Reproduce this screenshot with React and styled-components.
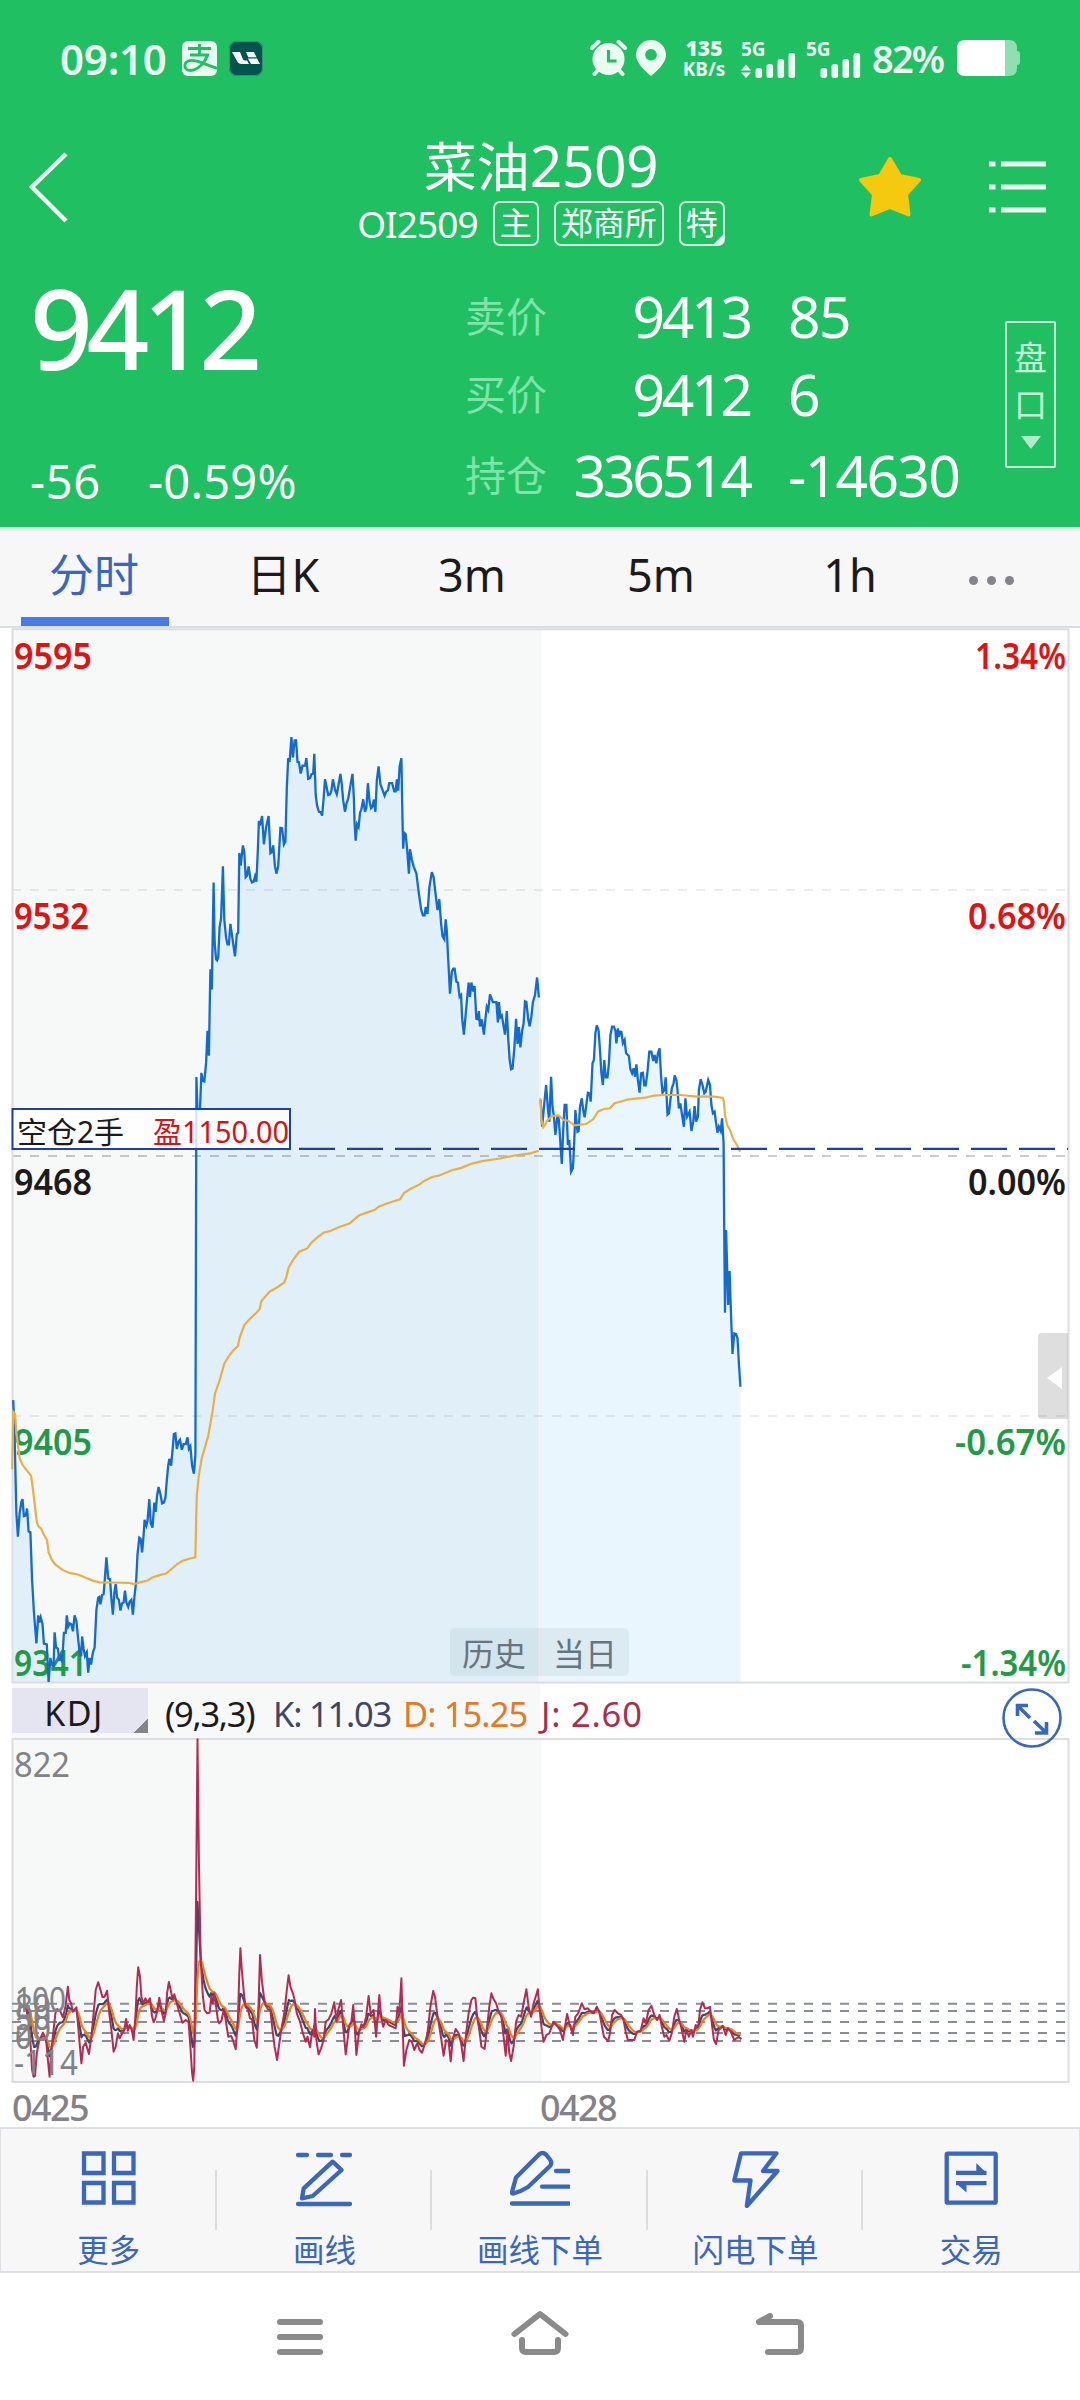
import React from "react";
import styled, { createGlobalStyle } from "styled-components";

const colors = {
  BRAND: "#20bf61",
  BRAND_MUTED: "#7fe3aa",
  UP: "#e01212",
  DOWN: "#1f9a48",
  TEXT: "#1b1b1b",
  TEXT_MUTED: "#828287",
  ACCENT: "#3a66bd",
  BORDER: "#dcdde1",
  PANEL: "#f7f7f8",
  PRICE: "#146bcf",
  AVERAGE: "#eaae48",
  K: "#3e4763",
  D: "#f07e1e",
  J: "#b32b52",
};

const FONT = '"Noto Sans", "Noto Sans CJK SC", sans-serif';

// Samples are stored as flat x,y lists on the plotting grid of each session.
const GRID_MORNING = { ox: 0, oy: 1140, sx: 2.8, sy: 2.703 };
const GRID_HISTORY = { ox: 0, oy: 620, sx: 2.8, sy: 2.8 };
const GRID_TODAY = { ox: 520, oy: 940, sx: 2.8, sy: 3 };
const GRID_KDJ = { ox: 0, oy: 1660, sx: 2.8, sy: 3 };
const GRID_KDJ_TODAY = { ox: 520, oy: 1660, sx: 2.8, sy: 3 };

const parse = (text, grid) =>
  text
    .trim()
    .split(/\s+/)
    .map((pair) => {
      const [x, y] = pair.split(",").map(Number);
      return [grid.ox + x / grid.sx, grid.oy + y / grid.sy];
    });

const line = (pts) =>
  "M" + pts.map(([x, y]) => `${x.toFixed(1)} ${y.toFixed(1)}`).join("L");

const area = (pts, bottom) =>
  `${line(pts)}L${pts[pts.length - 1][0].toFixed(1)} ${bottom}L${pts[0][0].toFixed(1)} ${bottom}Z`;

const priceHistory = [
  ...parse(
    `37,703 41,800 46,1010 50,1072 55,1010 60,978 63,971 67,1017 72,1015 76,996 80,1058 85,1060
    90,1190 95,1275 102,1361 107,1285 110,1304 114,1290 119,1308 123,1361 131,1363 136,1465 141,1400
    145,1418 150,1420 153,1331 157,1372 162,1375 166,1408 170,1390 174,1412 179,1332 184,1332
    187,1285 191,1315 195,1307 200,1310 204,1328 209,1285 214,1300 219,1350 223,1385 227,1395
    230,1342 234,1375 238,1395 243,1385 247,1440 251,1400 255,1418 260,1385 265,1372 270,1270
    275,1237 278,1235 281,1255 286,1230 290,1228 294,1180 298,1128 303,1185 308,1187 312,1240
    316,1283 320,1225 324,1200 328,1237 333,1243 337,1272 342,1252 346,1250 350,1218 354,1250
    359,1262 363,1248 368,1243 372,1283 377,1230 381,1195 385,1120 390,1075 394,1078 398,1115
    402,1068 405,1027 410,1042 413,1030 418,971 422,1035 427,1048 432,980 436,1005 440,960 444,938
    449,957 454,982 459,980 463,967 467,920 471,880 474,862 479,880 483,840 487,795 491,793 495,835
    500,815 504,810 509,837 514,822 520,822 525,804 529,835 533,828 538,880 543,902 547,850`,
    GRID_MORNING
  ),
  ...parse(
    `550,1280 553,1370 560,1370 564,1268 568,1290 572,1292 577,1240 581,1150 585,1220 587,1100
    589,978 593,1035 598,735 601,900 605,950 608,953 611,945 615,860 619,835 624,690 628,840 633,890
    637,908 641,908 645,851 650,885 658,942 663,880 667,875 670,652 674,688 680,631 684,650 688,720
    692,715 696,690 701,725 706,735 710,733 714,718 718,733 722,640 725,562 728,575 734,549 739,628
    745,580 752,549 757,653 761,650 765,631 770,690 774,710 779,690 785,582 790,583 795,628 799,620
    803,470 807,387 811,397 816,328 820,385 825,337 829,337 833,397 837,398 842,430 847,408 854,408
    858,387 863,445 868,443 872,432 877,430 880,375 884,490 888,520 893,537 898,538 902,548 906,500
    910,446 914,465 919,490 924,488 928,478 932,446 938,475 943,488 948,460 953,431 957,460 961,505
    966,537 970,515 975,500 980,470 987,431 991,500 993,570 996,618 1000,572 1004,580 1008,540
    1012,530 1017,502 1022,537 1026,525 1030,457 1035,510 1039,527 1043,522 1047,503 1051,537
    1055,450 1060,410 1065,460 1070,472 1077,492 1082,480 1086,477 1090,457 1098,457 1104,480
    1108,480 1111,446 1115,478 1119,410 1124,387 1127,560 1129,640 1132,596 1136,600 1140,640
    1145,710 1148,642 1153,670 1158,690 1166,710 1172,760 1179,810 1184,827 1189,827 1192,804
    1197,823 1202,750 1209,706 1214,720 1220,770 1225,812 1230,782 1235,850 1239,885 1244,894
    1248,838 1251,870 1255,950 1260,1046 1265,985 1269,976 1273,976 1278,1013 1282,1015 1287,1055
    1291,1050 1294,1115 1299,1161 1305,1090 1312,1015 1316,1055 1320,1015 1325,1040 1329,1025
    1334,1117 1338,1118 1341,1095 1344,1138 1349,1118 1355,1161 1360,1110 1363,1083 1367,1092
    1372,1048 1380,1070 1390,1070 1394,1127 1397,1070 1401,1112 1405,1107 1414,1161 1419,1095
    1423,1170 1427,1230 1431,1258 1435,1256 1440,1200 1445,1117 1449,1187 1453,1140 1457,1197
    1462,1150 1466,1130 1470,1068 1474,1070 1479,1118 1483,1138 1488,1110 1492,1070 1498,1050
    1504,1001 1509,1057`,
    GRID_HISTORY
  ),
];

const priceToday = parse(
  `58,480 62,560 68,490 73,435 78,505 82,545 87,410 91,500 95,530 99,585 105,525 109,540 113,610
  117,672 121,570 125,495 130,495 134,615 138,600 143,695 148,685 152,600 155,510 161,575 164,573
  168,500 173,475 177,510 181,532 185,500 190,458 195,460 198,485 203,370 207,360 211,280 215,256
  220,272 224,330 228,400 232,435 236,360 240,412 245,412 249,370 253,285 258,260 263,260 267,272
  270,310 274,265 277,290 280,275 284,276 288,310 293,300 297,340 305,348 309,388 314,400 318,385
  322,410 326,373 330,420 335,458 339,400 344,398 348,436 352,436 357,395 362,335 368,335 373,363
  377,345 382,370 386,340 391,325 395,410 399,458 404,450 408,412 413,524 417,520 421,480 425,445
  430,430 433,406 438,420 441,450 445,505 449,490 453,520 459,560 463,475 468,530 475,515 480,573
  485,545 489,498 493,545 498,530 501,450 506,418 511,435 516,460 520,455 527,420 532,435 536,495
  540,520 545,515 549,550 553,578 557,560 562,573 566,535 570,610 572,900 574,1118 577,870 580,980
  583,1095 587,993 591,1130 595,1242 600,1180 605,1182 609,1195 613,1270 617,1340`,
  GRID_TODAY
);

const averageHistory = parse(
  `34,890 37,735 42,740 46,790 55,860 63,878 75,893 87,908 93,950 103,1033 108,1045 115,1050
  122,1065 132,1082 136,1115 145,1135 155,1148 175,1162 195,1170 220,1175 240,1183 260,1191
  280,1196 310,1196 360,1197 375,1200 395,1195 413,1191 425,1183 445,1177 465,1172 480,1160
  495,1147 510,1138 530,1132 547,1128 549,1030 551,960 557,905 565,860 583,800 595,735 602,685
  615,650 628,605 642,582 655,567 666,557 671,535 684,500 700,483 720,465 727,457 732,435 755,410
  780,396 796,385 802,370 808,345 820,325 838,302 860,293 872,278 890,262 907,250 925,246 950,235
  980,225 1005,204 1025,197 1050,189 1060,180 1085,171 1120,160 1132,143 1150,132 1175,120
  1185,112 1210,100 1230,96 1265,82 1290,76 1320,64 1350,57 1400,50 1440,42 1485,36 1508,29`,
  GRID_MORNING
);

const averageToday = parse(
  `57,475 60,540 65,562 70,555 76,542 90,528 108,526 122,540 135,542 152,556 185,552 205,538
  218,515 235,507 252,505 265,490 285,484 305,478 350,473 375,467 400,465 450,465 495,470 545,470
  568,474 571,485 574,525 580,555 588,570 597,597 609,618 616,635`,
  GRID_TODAY
);

const kdjJ = [
  ...parse(
    `66,1030 72,1040 80,1080 86,1160 90,1230 94,1250 98,1248 103,1180 110,1140 115,1130 120,1118
    126,1130 130,1150 134,1200 139,1250 143,1180 149,1120 155,1060 160,1047 168,1052 176,1072
    183,1040 190,980 194,1020 199,1030 204,1055 214,1042 219,1100 228,1210 233,1160 240,1148
    249,1182 256,1130 262,1060 268,990 275,967 280,985 287,1012 293,1010 300,992 306,1060 312,1110
    318,1175 324,1160 330,1120 335,1135 340,1125 348,1110 353,1077 358,1112 363,1095 369,1110
    374,1140 379,1070 383,980 387,922 392,950 396,1010 401,1030 407,1015 412,1027 420,1015 425,1065
    430,1087 435,1075 440,1055 446,1013 452,1050 459,1083 464,1060 468,1000 473,966 478,990 483,1018
    488,1003 494,1025 500,1050 511,1088 520,1080 528,1087 533,1160 538,1240 541,1262 544,1220
    549,700 553,238 557,600 562,900 568,1010 573,1050 580,1060 587,1058 592,1010 596,1030 600,1000
    605,1040 610,1080 614,1090 620,1082 627,1048 632,1080 639,1130 647,1128 652,1140 660,1168
    666,1080 670,940 673,865 677,930 682,990 687,1040 694,1048 700,1075 706,1078 712,1140 719,1163
    724,1030 728,885 733,960 739,1010 743,1035 750,1048 757,1050 763,1110 769,1160 776,1200 782,1150
    789,1100 796,1060 803,990 808,946 813,980 820,1000 825,1020 831,1060 840,1085 848,1120 856,1145
    861,1130 868,1162 875,1110 880,1130 882,1047 886,1140 892,1183 899,1165 906,1140 912,1085
    920,1078 928,1060 936,1027 942,1085 947,1050 955,1020 960,1090 968,1183 973,1140 978,1095
    984,1085 989,1035 993,1090 998,1185 1005,1120 1012,1093 1018,1100 1025,1070 1032,1008 1038,1060
    1046,1050 1053,1130 1058,1060 1062,1005 1067,1070 1073,1100 1080,1080 1088,1095 1098,1100
    1108,1105 1113,1040 1118,1060 1124,955 1127,1080 1131,1217 1138,1170 1146,1140 1153,1145
    1160,1170 1168,1150 1175,1170 1182,1178 1190,1150 1197,1120 1205,1040 1213,993 1218,1010
    1224,1060 1230,1100 1236,1140 1242,1187 1249,1140 1256,1145 1262,1204 1268,1135 1276,1107
    1284,1120 1291,1150 1298,1203 1305,1120 1312,1060 1320,1020 1325,1013 1331,1015 1336,1070
    1342,1110 1348,1160 1357,1167 1363,1110 1370,1040 1376,1000 1382,1018 1389,1030 1396,1055
    1404,1070 1410,1130 1416,1187 1421,1110 1426,1180 1431,1203 1438,1160 1445,1085 1452,1065
    1459,1070 1466,1030 1474,988 1480,1040 1487,1070 1494,1030 1500,1010 1506,988 1511,1050`,
    GRID_KDJ
  ),
  ...parse(
    `60,1100 66,1145 74,1125 82,1120 94,1085 102,1095 112,1110 120,1140 126,1100 132,1062 138,1090
    148,1125 155,1070 163,1060 173,1030 181,1048 190,1045 198,1055 206,1060 215,1040 222,1055
    228,1090 235,1130 247,1143 252,1120 258,1065 265,1050 274,1060 283,1065 290,1080 296,1115
    302,1140 320,1140 328,1115 338,1112 346,1075 352,1090 360,1050 368,1037 376,1065 384,1080
    391,1065 397,1100 404,1130 410,1125 418,1142 425,1120 432,1070 439,1047 445,1075 452,1105
    460,1145 466,1110 473,1130 480,1110 484,1130 492,1095 499,1100 504,1050 511,1027 518,1045
    526,1045 532,1040 537,1090 543,1140 549,1152 556,1110 562,1105 568,1097 576,1125 582,1105
    590,1115 600,1140 612,1130 620,1138`,
    GRID_KDJ_TODAY
  ),
];

// J = 3K - 2D and D is a 1/3 smoothing of K, so both follow from J.
const deriveKD = (pts, step) => {
  const k = [];
  const d = [];
  let prev = pts[0][1];
  let i = 0;
  for (let x = pts[0][0]; x <= pts[pts.length - 1][0]; x += step) {
    while (i < pts.length - 2 && pts[i + 1][0] < x) i++;
    const [x0, y0] = pts[i];
    const [x1, y1] = pts[i + 1];
    const j = y0 + ((y1 - y0) * (x - x0)) / (x1 - x0);
    const kv = (3 * j + 4 * prev) / 7;
    prev = (2 * prev + kv) / 3;
    k.push([x, kv]);
    d.push([x, prev]);
  }
  return { k, d };
};

const kd = deriveKD(kdjJ, 1.525);

const tabs = ["分时", "日K", "3m", "5m", "1h"];

const quotes = [
  { label: "卖价", value: "9413", extra: "85" },
  { label: "买价", value: "9412", extra: "6" },
  { label: "持仓", value: "336514", extra: "-14630" },
];

const priceLabels = [
  { y: 669, left: "9595", right: "1.34%", color: colors.UP, w: 78, rw: 91 },
  { y: 929, left: "9532", right: "0.68%", color: colors.UP, w: 75, rw: 98 },
  { y: 1195, left: "9468", right: "0.00%", color: colors.TEXT, w: 78, rw: 98 },
  { y: 1455, left: "9405", right: "-0.67%", color: colors.DOWN, w: 78, rw: 111 },
  { y: 1676, left: "9341", right: "-1.34%", color: colors.DOWN, w: 73, rw: 105 },
];

const kdjLevels = [
  { y: 2003.7, text: "100", w: 51 },
  { y: 2011, text: "80", w: 36 },
  { y: 2022, text: "50", w: 36 },
  { y: 2033, text: "20", w: 36 },
  { y: 2041, text: "0", w: 17 },
];

const MoreIcon = () => (
  <Icon>
    <path d="M5 5.5h19.5v19.5H5zM35 5.5h19.5v19.5H35zM5 35h19.5v19.5H5zM35 35h19.5v19.5H35z" />
  </Icon>
);

const DrawIcon = () => (
  <Icon $round>
    <path d="M4 7h9M24 7h13M48 7h8M4 56h52M38.6 13.7L47.6 22L18.7 48L8 50.3L9.7 40.3Z" />
  </Icon>
);

const DrawOrderIcon = () => (
  <Icon $round>
    <path d="M2 55.5h57M46 23h13M32 38.7h27M2 44L6 29.5L29 6.5q3.5-3 7 0L40 11.5q2.5 3.5 0 6.5L18 39Q11 43.5 3.5 45.5Q1.5 45.5 2 44Z" />
  </Icon>
);

const FlashIcon = () => (
  <Icon $round>
    <path d="M15 5.3H50.5L37 23H51.5L20.8 58L24.5 32.5H8.3Z" />
  </Icon>
);

const TradeIcon = () => (
  <Icon>
    <rect x="5.7" y="5.7" width="49" height="49" rx="1" />
    <path d="M15 24.8H45.5M15 35.2H45.5" />
    <path d="M35.3 15.2L45.5 24.8H35.3ZM15 35.2H25.5V44.5Z" fill="currentColor" stroke="none" />
  </Icon>
);

const actions = [
  { label: "更多", icon: <MoreIcon /> },
  { label: "画线", icon: <DrawIcon /> },
  { label: "画线下单", icon: <DrawOrderIcon /> },
  { label: "闪电下单", icon: <FlashIcon /> },
  { label: "交易", icon: <TradeIcon /> },
];

const Signal = ({ active }) => (
  <SignalSvg width="58" height="50" viewBox="0 -12 58 50" fill="#ecfbf2">
    <text x="0" y="14" fontSize="19" fontWeight="700" fontFamily={FONT}>
      5G
    </text>
    {active && <path d="M0 28.5L5 22.5L10 28.5ZM0 30.5L5 36L10 30.5Z" />}
    <rect x="14.5" y="26" width="6.6" height="10" rx="2.5" />
    <rect x="25.5" y="22" width="6.6" height="14" rx="2.5" />
    <rect x="36.5" y="17" width="6.6" height="19" rx="2.5" />
    <rect x="47.5" y="11" width="6.6" height="25" rx="2.5" />
  </SignalSvg>
);

const StatusBar = () => (
  <Status>
    <Clock>09:10</Clock>
    <svg width="35" height="35" viewBox="0 0 35 35">
      <rect width="35" height="35" rx="6" fill="#ecfbf2" />
      <g fill="none" stroke={colors.BRAND} strokeWidth="2.8">
        <path d="M6 7.500H29M17.5 3V14M8 14H27" />
        <path d="M25.5 14C23 22 15 29.5 8.5 29.5C2.5 29.5 1.5 24 4.5 21C9 17 16 20 35 27.5" />
      </g>
    </svg>
    <AppBadge>
      <svg width="28" height="14" viewBox="0 0 28 14" fill="#fff">
        <path d="M0 1H8L11 8.500Q11.500 9.500 13 9.500H15L17 13H9.500Q6.500 13 5 10Z" />
        <path d="M14 1H22L24.500 6.200H16.300ZM16 7.500H25L28 13H19Z" />
      </svg>
    </AppBadge>
    <Spacer />
    <svg width="37" height="36" viewBox="0 0 37 36" fill="#ecfbf2">
      <circle cx="18.5" cy="19" r="16" />
      <path
        d="M2 8L8.5 1.8M35 8L28.5 1.8M8 30L4.500 34M29 30L32.5 34"
        stroke="#ecfbf2"
        strokeWidth="4"
        strokeLinecap="round"
      />
      <path d="M18.5 10V21H26.5" fill="none" stroke={colors.BRAND} strokeWidth="3" />
    </svg>
    <PinIcon width="30" height="36" viewBox="0 0 30 36">
      <path
        fillRule="evenodd"
        fill="#ecfbf2"
        d="M15 0a15 15 0 0 1 15 15C30 23 21 31 15 36C9 31 0 23 0 15A15 15 0 0 1 15 0ZM15 9a5.8 5.8 0 1 0 .01 0Z"
      />
    </PinIcon>
    <Speed>
      <b>135</b>
      <span>KB/s</span>
    </Speed>
    <Signal active />
    <SecondSignal>
      <Signal />
    </SecondSignal>
    <Battery>82%</Battery>
    <svg width="63" height="36" viewBox="0 0 63 36">
      <path d="M48 0h4q8 0 8 8v3q3 0 3 3v8q0 3-3 3v3q0 8-8 8h-4z" fill="#8fe0b1" />
      <path d="M8 0h40v36H8q-8 0-8-8V8q0-8 8-8z" fill="#fff" />
    </svg>
  </Status>
);

const PriceChart = () => (
  <ChartSvg width="1080" height="1058" viewBox="0 628 1080 1058">
    <rect x="13" y="628" width="527" height="1058" fill="#f7f9f9" />
    <path d={area(priceHistory, 1682)} fill="#e1eff8" />
    <path d={area(priceToday, 1682)} fill="#eaf6fd" />
    <path d="M12 890H1068M12 1416H1068" stroke="#000" strokeOpacity=".07" strokeWidth="2" strokeDasharray="9 9" />
    <path d="M12 1156H1068" stroke="#000" strokeOpacity=".2" strokeWidth="2" strokeDasharray="9 9" />
    <path d="M540.5 628V1682" stroke="#000" strokeOpacity=".04" strokeWidth="1.5" />
    <path d="M12.5 629.3H1068.5V1682.5H12.5Z" fill="none" stroke={colors.BORDER} strokeWidth="2" />
    <ChartText $weight={600}>
      {priceLabels.map((l) => (
        <React.Fragment key={l.left}>
          <text x="14" y={l.y} fill={l.color} textLength={l.w} lengthAdjust="spacingAndGlyphs">
            {l.left}
          </text>
          <text x={1066 - l.rw} y={l.y} fill={l.color} textLength={l.rw} lengthAdjust="spacingAndGlyphs">
            {l.right}
          </text>
        </React.Fragment>
      ))}
    </ChartText>
    <path d={line(priceHistory)} fill="none" stroke={colors.PRICE} strokeWidth="2.3" />
    <path d={line(priceToday)} fill="none" stroke={colors.PRICE} strokeWidth="2.3" />
    <path d={line(averageHistory)} fill="none" stroke={colors.AVERAGE} strokeWidth="2.2" />
    <path d={line(averageToday)} fill="none" stroke={colors.AVERAGE} strokeWidth="2.2" />
    <path d="M299 1148.8H1068" stroke="#1f3fa3" strokeWidth="2.2" strokeDasharray="36 12" />
    <rect x="12.5" y="1109" width="277.5" height="40" fill="#fff" fillOpacity=".82" stroke="#1f3fa3" strokeWidth="2" />
    <ChartText $size={30}>
      <text x="17" y="1143" fill={colors.TEXT} textLength="107">
        空仓2手
      </text>
      <text x="153" y="1143" fill="#d01616" textLength="136" lengthAdjust="spacingAndGlyphs">
        盈1150.00
      </text>
    </ChartText>
    <rect x="450" y="1628" width="179" height="48" rx="5" fill="#5b7688" fillOpacity=".09" />
    <ChartText $size={32}>
      <text x="462" y="1665.500" fill="#66757f">
        历史
      </text>
      <text x="553" y="1665.500" fill="#66757f">
        当日
      </text>
    </ChartText>
    <path d="M1068 1333H1042q-4 0-4 4v78q0 4 4 4h26z" fill="#000" fillOpacity=".13" />
    <path d="M1047 1378L1062 1367V1389Z" fill="#fff" />
  </ChartSvg>
);

const KdjChart = () => (
  <ChartSvg width="1080" height="348" viewBox="0 1737 1080 348">
    <rect x="13" y="1737" width="527" height="345" fill="#f7f9f9" />
    <path d="M540.5 1737V2082" stroke="#000" strokeOpacity=".04" strokeWidth="1.5" />
    <path d="M12.5 1739H1068.5V2082H12.5Z" fill="none" stroke={colors.BORDER} strokeWidth="2" />
    {kdjLevels.map((l) => (
      <path key={l.text} d={`M12 ${l.y}H1066`} stroke="#898c94" strokeWidth="2" strokeDasharray="9 9" />
    ))}
    <g fill="none" strokeWidth="2.2" strokeLinejoin="round">
      <path d={line(kd.k)} stroke={colors.K} />
      <path d={line(kd.d)} stroke={colors.D} />
      <path d={line(kdjJ)} stroke={colors.J} strokeWidth="2" />
    </g>
    <ChartText fill={colors.TEXT_MUTED} $size={35}>
      <text x="14" y="1777" textLength="56" lengthAdjust="spacingAndGlyphs">
        822
      </text>
      {kdjLevels.map((l) => (
        <text key={l.text} x="15" y={l.y + 8} textLength={l.w} lengthAdjust="spacingAndGlyphs">
          {l.text}
        </text>
      ))}
      <text x="14" y="2075" textLength="64" lengthAdjust="spacingAndGlyphs">
        -114
      </text>
    </ChartText>
  </ChartSvg>
);

const App = () => (
  <>
    <GlobalStyle />
    <Page>
      <Header>
        <StatusBar />
        <TitleBar>
          <svg width="48" height="76" viewBox="0 0 48 76" fill="none" stroke="#ecfbf2" strokeWidth="4.5">
            <path d="M46 5L12 38L46 72" />
          </svg>
          <TitleBlock>
            <Title>
              菜油<span>2509</span>
            </Title>
            <SubTitle>
              <Code>OI2509</Code>
              <Tag>主</Tag>
              <Tag>郑商所</Tag>
              <Tag $corner>特</Tag>
            </SubTitle>
          </TitleBlock>
          <StarIcon width="64" height="62" viewBox="0 0 64 62">
            <path
              d="M32 3L42 20L61 24L48 38.5L50.5 58.5L32 51L13.5 58.5L16 38.5L3 24L22 20Z"
              fill="#f5c90f"
              stroke="#f5c90f"
              strokeWidth="4"
              strokeLinejoin="round"
            />
          </StarIcon>
          <svg width="58" height="60" viewBox="0 0 58 60" stroke="#ecfbf2" strokeWidth="5" fill="none">
            <path d="M0 7H6.5M12 7H57M0 30H6.5M12 30H57M0 53H6.5M12 53H57" />
          </svg>
        </TitleBar>
        <Quote>
          <Last>
            <LastPrice>9412</LastPrice>
            <Change>
              <span>-56</span>
              <span>-0.59%</span>
            </Change>
          </Last>
          <QuoteGrid>
            {quotes.map((q) => (
              <React.Fragment key={q.label}>
                <QuoteLabel>{q.label}</QuoteLabel>
                <QuoteValue $right>{q.value}</QuoteValue>
                <QuoteValue>{q.extra}</QuoteValue>
              </React.Fragment>
            ))}
          </QuoteGrid>
          <DepthButton>
            <span>盘</span>
            <span>口</span>
            <svg width="20" height="13" viewBox="0 0 20 13">
              <path d="M0 0H20L10 13Z" fill="#b4ebcb" />
            </svg>
          </DepthButton>
        </Quote>
      </Header>
      <Tabs>
        {tabs.map((t, i) => (
          <Tab key={t} $active={i === 0}>
            {t}
          </Tab>
        ))}
        <MoreTab>
          <i />
          <i />
          <i />
        </MoreTab>
      </Tabs>
      <PriceChart />
      <IndicatorBar>
        <HistoryShade>
          <IndicatorName>KDJ</IndicatorName>
        </HistoryShade>
        <IndicatorValues>
          <IndicatorText $width={108} $color={colors.TEXT} $spacing={-1.3}>(9,3,3)</IndicatorText>
          <IndicatorText $width={130} $color={colors.K} $spacing={-1.2}>K: 11.03</IndicatorText>
          <IndicatorText $width={138} $color="#e27b27" $spacing={-0.9}>D: 15.25</IndicatorText>
          <IndicatorText $width={110} $color="#a8304f" $spacing={0.8}>J: 2.60</IndicatorText>
        </IndicatorValues>
        <ExpandButton>
          <svg width="60" height="60" viewBox="0 0 60 60" fill="none" stroke={colors.ACCENT}>
            <circle cx="30" cy="30" r="28.5" strokeWidth="2.6" />
            <path d="M15.5 28V17.5H26M15.5 17.5L28 30M44.5 34V45H33M44.5 45L32 33" strokeWidth="3.6" />
          </svg>
        </ExpandButton>
      </IndicatorBar>
      <KdjChart />
      <Dates>
        <span>0425</span>
        <span>0428</span>
      </Dates>
      <Toolbar>
        {actions.map((a) => (
          <Action key={a.label}>
            {a.icon}
            <span>{a.label}</span>
          </Action>
        ))}
      </Toolbar>
      <NavBar>
        <svg width="60" height="60" viewBox="270 2304 60 60">
          <path d="M280 2322H320M280 2337H320M280 2352H320" />
        </svg>
        <svg width="60" height="60" viewBox="510 2304 60 60">
          <path d="M514.5 2334L540 2314L565.5 2334M522 2340V2348Q522 2352 526 2352H554Q558 2352 558 2348V2340" />
        </svg>
        <svg width="60" height="60" viewBox="750 2304 60 60">
          <path d="M770 2316L759 2322H797Q801 2322 801 2326V2348Q801 2352 797 2352H768" />
        </svg>
      </NavBar>
    </Page>
  </>
);

const GlobalStyle = createGlobalStyle`
  body {
    margin: 0;
    background: #fff;
  }
`;

const Page = styled.div`
  display: flex;
  flex-direction: column;
  width: 1080px;
  height: 2400px;
  overflow: hidden;
  background: #fff;
  color: ${colors.TEXT};
  font-family: ${FONT};

  svg {
    display: block;
    flex-shrink: 0;
  }
`;

const Header = styled.header`
  height: 527px;
  flex-shrink: 0;
  background: ${colors.BRAND};
  border-bottom: 2px solid #c9efd8;
  color: #fff;
`;

const Status = styled.div`
  display: flex;
  align-items: center;
  height: 116px;
  padding: 0 60px;
  color: #ecfbf2;
`;

const Clock = styled.div`
  width: 122px;
  font-size: 42px;
  font-weight: 600;
  letter-spacing: -0.2px;
`;

const AppBadge = styled.div`
  display: flex;
  align-items: center;
  justify-content: center;
  width: 34px;
  height: 35px;
  margin-left: 12px;
  border-radius: 8px;
  background: #03544f;
  box-shadow: 0 0 0 1px #3a8f78 inset;
`;

const Spacer = styled.div`
  flex: 1;
`;

const PinIcon = styled.svg`
  margin-left: 9px;
`;

const Speed = styled.div`
  display: flex;
  flex-direction: column;
  align-items: center;
  width: 44px;
  margin: 0 15px 0 16px;
  font-size: 19px;
  line-height: 20px;
  font-weight: 700;

  b {
    font-size: 21px;
    line-height: 21px;
  }
`;

const SignalSvg = styled.svg`
  margin: -6px 0 0 0;
`;

const SecondSignal = styled.div`
  margin-left: 7px;
`;

const Battery = styled.div`
  width: 76px;
  margin: 0 9px 0 8px;
  font-size: 38px;
  font-weight: 600;
  letter-spacing: -1.8px;
  white-space: nowrap;
`;

const TitleBar = styled.div`
  display: flex;
  align-items: center;
  height: 142px;
  padding: 0 33px 0 20px;
`;

const TitleBlock = styled.div`
  flex: 1;
  display: flex;
  flex-direction: column;
  align-items: center;
  padding: 8px 0 0 156px;
`;

const Title = styled.h1`
  margin: 0;
  font-size: 53px;
  line-height: 62px;
  font-weight: 400;

  span {
    font-size: 57px;
    letter-spacing: -0.5px;
  }
`;

const SubTitle = styled.div`
  display: flex;
  align-items: center;
  height: 50px;
  gap: 15px;
`;

const Code = styled.span`
  font-size: 37px;
  font-weight: 400;
  letter-spacing: -0.9px;
`;

const Tag = styled.span`
  height: 41px;
  padding: 0 5px;
  border: 2px solid #d5f6e2;
  border-radius: 7px;
  font-size: 32px;
  line-height: 40px;
  background: ${(props) =>
    props.$corner
      ? "linear-gradient(135deg, transparent calc(100% - 7px), #fff calc(100% - 6px))"
      : "none"};
`;

const StarIcon = styled.svg`
  margin-right: 67px;
`;

const Quote = styled.div`
  display: flex;
  height: 269px;
`;

const Last = styled.div`
  width: 465px;
  padding-left: 30px;
  box-sizing: border-box;
`;

const LastPrice = styled.div`
  font-size: 110px;
  line-height: 138px;
  font-weight: 500;
  letter-spacing: -6.5px;
`;

const Change = styled.div`
  display: flex;
  margin-top: 58px;
  font-size: 47px;
  line-height: 54px;
  letter-spacing: 0.2px;

  span:first-child {
    width: 118px;
    letter-spacing: 0.6px;
  }
`;

const QuoteGrid = styled.div`
  display: grid;
  grid-template-columns: 86px 199px 230px;
  grid-template-rows: 78px 78px 84px;
  align-items: center;
  align-content: start;
  padding-top: 19px;
`;

const QuoteLabel = styled.span`
  font-size: 41px;
  line-height: 60px;
  color: ${colors.BRAND_MUTED};
`;

const QuoteValue = styled.span`
  padding-left: ${(props) => (props.$right ? 0 : 38)}px;
  font-size: 57px;
  line-height: 60px;
  letter-spacing: ${(props) => (props.$right ? -3.2 : -1.7)}px;
  text-align: ${(props) => (props.$right ? "right" : "left")};
`;

const DepthButton = styled.div`
  display: flex;
  flex-direction: column;
  align-items: center;
  width: 47px;
  height: 132px;
  margin: 63px 0 0 25px;
  padding-top: 11px;
  border: 2px solid #c5f2d7;
  border-radius: 2px;
  font-size: 33px;
  line-height: 47px;
  color: #c5f2d7;

  svg {
    margin-top: 8px;
  }
`;

const Tabs = styled.nav`
  display: flex;
  height: 97px;
  flex-shrink: 0;
  background: ${colors.PANEL};
  border-bottom: 2px solid ${colors.BORDER};
`;

const Tab = styled.div`
  width: 148px;
  height: 88px;
  margin: 0 20px 0 21px;
  border-bottom: 9px solid ${(props) => (props.$active ? "#4b7be0" : "transparent")};
  font-size: 45px;
  line-height: 91px;
  text-align: center;
  text-indent: -2px;
  color: ${(props) => (props.$active ? colors.ACCENT : colors.TEXT)};
`;

const MoreTab = styled.div`
  display: flex;
  align-items: center;
  gap: 9px;
  padding: 6px 0 0 24px;

  i {
    width: 9px;
    height: 9px;
    border-radius: 50%;
    background: #84848a;
  }
`;

const ChartSvg = styled.svg`
  display: block;
`;

const ChartText = styled.g`
  font-family: ${FONT};
  font-size: ${(props) => props.$size || 36}px;
  font-weight: ${(props) => props.$weight || 400};
`;

const IndicatorBar = styled.div`
  position: relative;
  display: flex;
  height: 51px;
  flex-shrink: 0;
  padding-left: 12px;
  background: linear-gradient(90deg, #fff 12px, #f7f9f9 12px, #f7f9f9 540px, #fff 540px);
`;

const HistoryShade = styled.div`
  width: 153px;
  padding-top: 2px;
`;

const IndicatorName = styled.div`
  width: 136px;
  height: 45px;
  padding-right: 12px;
  box-sizing: border-box;
  font-size: 34px;
  line-height: 51px;
  text-align: center;
  letter-spacing: 1.5px;
  background: linear-gradient(135deg, transparent calc(100% - 10.5px), #84848a calc(100% - 10px)),
    #e4e5f0;
`;

const IndicatorValues = styled.div`
  display: flex;
  padding-top: 3px;
`;

const IndicatorText = styled.span`
  width: ${(props) => props.$width}px;
  font-size: 34.5px;
  line-height: 49px;
  letter-spacing: ${(props) => props.$spacing}px;
  white-space: nowrap;
  color: ${(props) => props.$color};
`;

const ExpandButton = styled.div`
  position: absolute;
  right: 18px;
  top: 2px;
  z-index: 1;
`;

const Dates = styled.div`
  display: grid;
  grid-template-columns: 528px 1fr;
  height: 42px;
  padding-left: 12px;
  font-size: 36px;
  font-weight: 500;
  line-height: 45px;
  letter-spacing: -1.6px;
  color: ${colors.TEXT_MUTED};
`;

const Toolbar = styled.div`
  display: flex;
  height: 146px;
  flex-shrink: 0;
  box-sizing: border-box;
  border: 2px solid #dfe0e3;
  border-width: 2px 1px;
  background: ${colors.PANEL};
`;

const Action = styled.div`
  flex: 1;
  display: flex;
  flex-direction: column;
  align-items: center;
  padding-top: 19px;
  font-size: 31.5px;
  line-height: 56px;
  color: ${colors.ACCENT};

  &:not(:last-child) {
    background: linear-gradient(${colors.BORDER}, ${colors.BORDER}) right 41px / 2px 60px no-repeat;
  }

  span {
    margin: 14px 0 -10px;
  }
`;

const Icon = styled.svg.attrs({ width: 60, height: 60, viewBox: "0 0 60 60" })`
  fill: none;
  stroke: currentColor;
  stroke-width: 4.3;
  stroke-linecap: ${(props) => (props.$round ? "round" : "butt")};
  stroke-linejoin: ${(props) => (props.$round ? "round" : "miter")};
`;

const NavBar = styled.div`
  display: flex;
  justify-content: center;
  gap: 180px;
  padding-top: 31px;

  path {
    fill: none;
    stroke: #8a8a8a;
    stroke-width: 6;
    stroke-linecap: round;
    stroke-linejoin: round;
  }
`;

export default App;
